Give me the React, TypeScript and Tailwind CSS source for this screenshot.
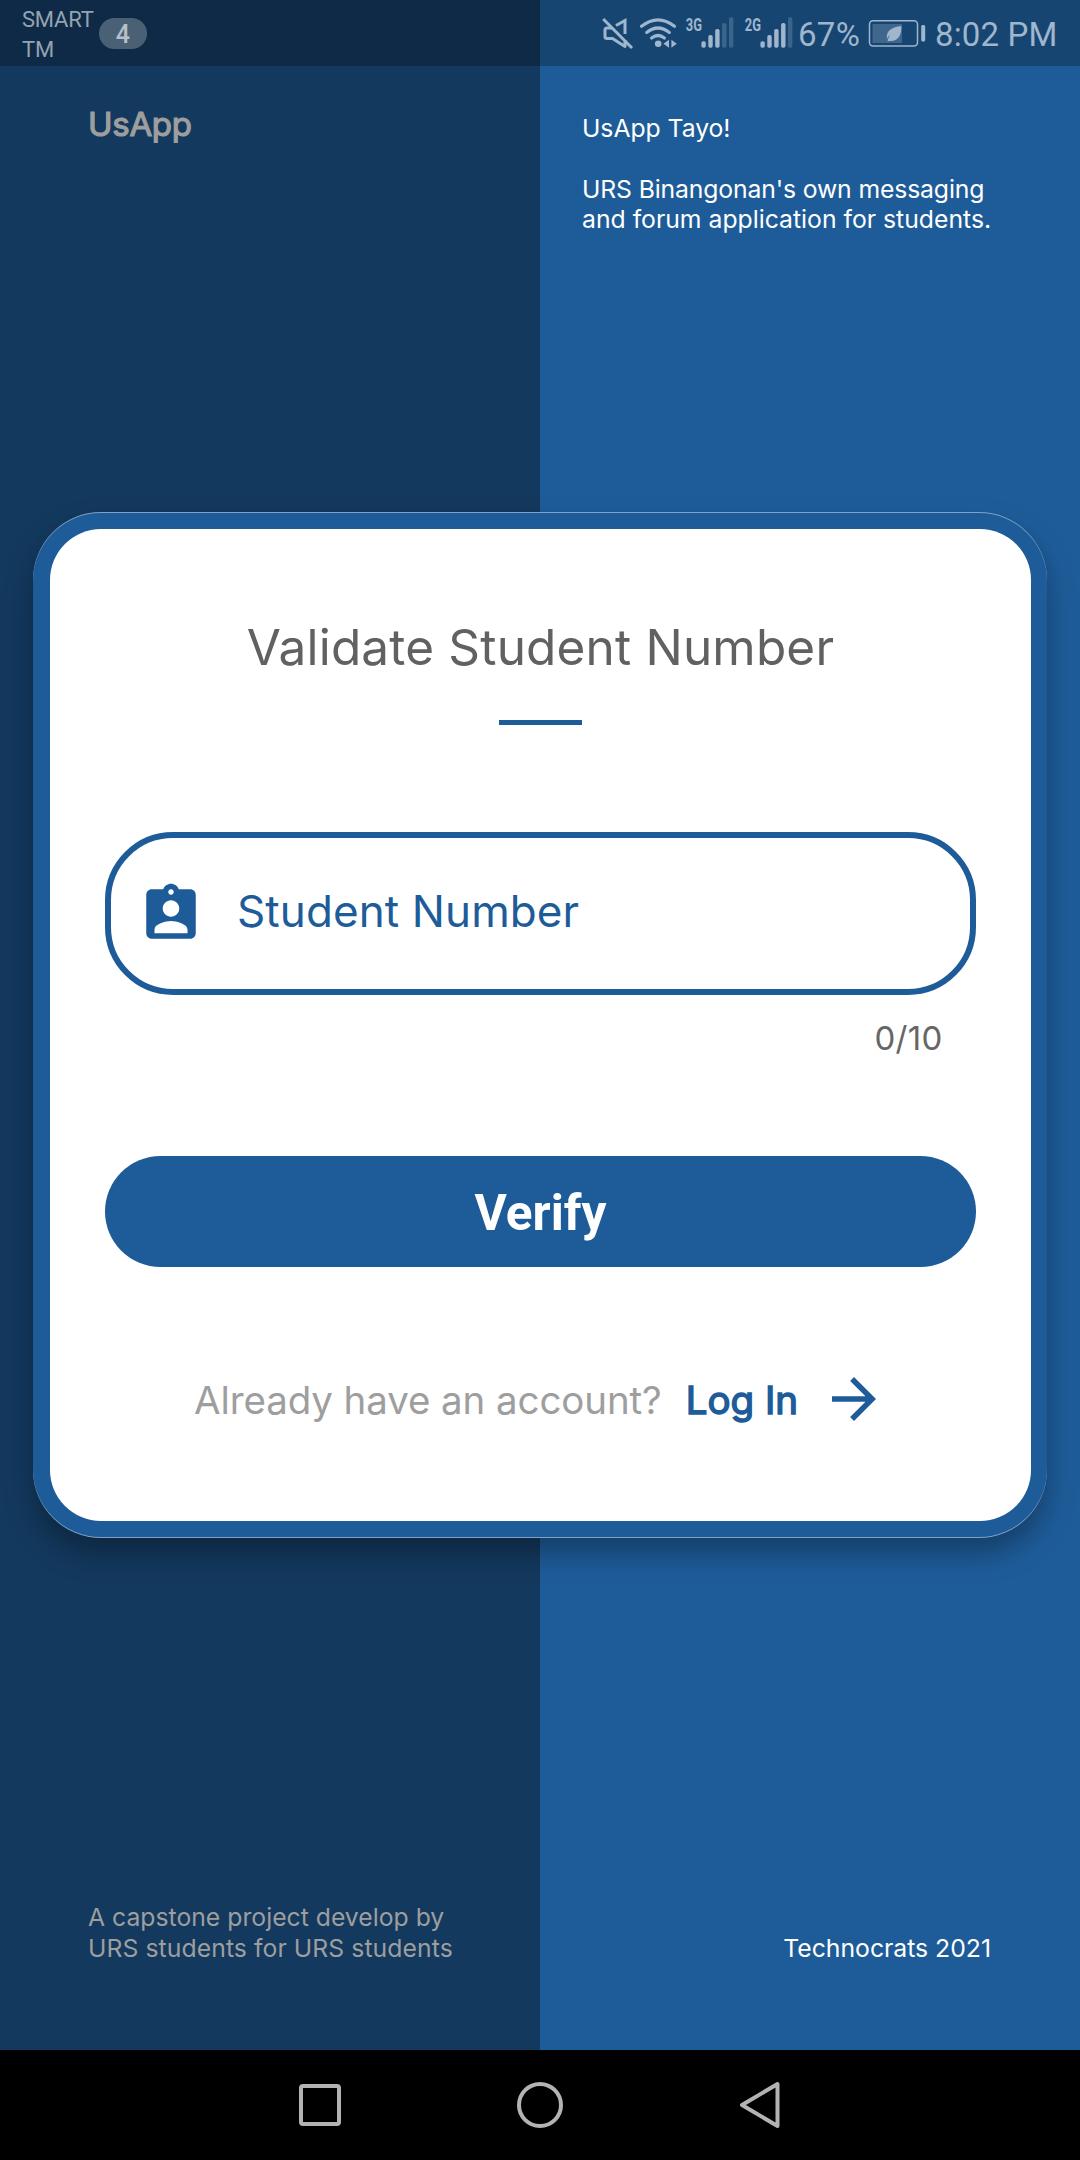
import React from "react";

function MuteIcon() {
  return (
    <svg className="ml-[600px] h-[66px] w-9 shrink-0" viewBox="0 0 36 66" fill="none" stroke="currentColor" strokeWidth="3">
      <path d="M12.500 28H7Q5 28 5 30V36.500Q5 38.500 7 38.500H12.500L25 46.500V40" strokeLinejoin="round" />
      <path d="M16 25.500L25 20.500V34" strokeLinejoin="miter" />
      <path d="M3.2 19L32 48" />
    </svg>
  );
}

function WifiIcon() {
  return (
    <svg className="h-[66px] w-10 shrink-0" viewBox="0 0 40 66" fill="none" stroke="currentColor" strokeWidth="3.200" strokeLinecap="round">
      <path d="M3.500 26.2Q20 13.4 36.500 26.2" />
      <path d="M8.7 32.4Q20 23.6 31.3 32.4" />
      <path d="M13.6 38Q20 33 26.4 38" />
      <circle cx="20.2" cy="43.800" r="3.300" fill="currentColor" stroke="none" />
      <path d="M31 39.800V47.800L25.400 43.800ZM33.400 39.800V47.800L38.800 43.800Z" fill="currentColor" stroke="none" />
    </svg>
  );
}

function Signal({ label, level }: { label: string; level: number }) {
  return (
    <svg className="h-[66px] w-[50px] shrink-0" viewBox="0 0 50 66" fill="currentColor">
      <text x="0.8" y="31.2" fontFamily="Roboto, sans-serif" fontWeight="700" fontSize="19" textLength="16.200" lengthAdjust="spacingAndGlyphs">
        {label}
      </text>
      {[41.3, 35, 29, 23, 17.3].map((top, i) => (
        <rect key={top} x={16.4 + i * 6.9} y={top} width="4.4" height={47.8 - top} rx="1.8" opacity={i < level ? 1 : 0.28} />
      ))}
    </svg>
  );
}

function BatteryIcon() {
  return (
    <svg className="h-[66px] w-[58px] shrink-0" viewBox="0 0 58 66" fill="none">
      <rect x="1.500" y="20.800" width="48" height="25.200" rx="3.500" stroke="currentColor" strokeWidth="1.500" />
      <rect x="4.500" y="24" width="29.500" height="19" fill="currentColor" opacity="0.3" />
      <rect x="53.200" y="25" width="4" height="16.500" rx="1.500" fill="currentColor" />
      <path d="M33.300 26C33.600 34 31 41.400 22 41L19.600 41.200C19.800 38.800 21 36.400 23 34.800C20.800 36 19.400 37.600 18.900 39.500C17.600 30 24 27.400 33.300 26Z" fill="currentColor" />
    </svg>
  );
}

function StatusBar() {
  return (
    <header className="absolute inset-x-0 top-0 flex h-[66px] font-['Roboto',sans-serif] text-[#9fb6cd]">
      <div className="flex w-0 shrink-0 text-[#93a3b2]">
        <div className="ml-[22px] w-[77px] shrink-0 pt-[5px] text-[22px] leading-[30px] tracking-[-0.2px]">
          SMART
          <br />
          TM
        </div>
        <div className="mt-[18px] flex h-[31px] w-[47.5px] shrink-0 items-center justify-center rounded-full bg-[#4a6175] pt-[2px] text-[25px] leading-[30px] font-medium text-[#b6c0c9]">
          4
        </div>
      </div>
      <MuteIcon />
      <span className="w-[2px] shrink-0" />
      <WifiIcon />
      <span className="w-[7px] shrink-0" />
      <Signal label="3G" level={3} />
      <span className="w-[9px] shrink-0" />
      <Signal label="2G" level={4} />
      <span className="ml-[4px] w-[70px] shrink-0 text-[33px] leading-[69px] tracking-[0.3px]">67%</span>
      <BatteryIcon />
      <span className="ml-[9px] shrink-0 text-[33px] leading-[69px] tracking-[0.15px] whitespace-nowrap">8:02 PM</span>
    </header>
  );
}

function Background() {
  return (
    <div className="grid h-[2050px] grid-cols-2 text-[24.75px] leading-[30.25px]">
      <section className="flex flex-col justify-between bg-[#13395e] pt-[104px] pb-[86px] pl-[88px] text-[#9e9e9e]">
        <h1 className="text-[33px] leading-[40px] tracking-[-0.3px] [-webkit-text-stroke:1.2px]">UsApp</h1>
        <p className="leading-[31px] whitespace-nowrap">
          A capstone project develop by
          <br />
          <span className="tracking-[0.07px]">URS students for URS students</span>
        </p>
      </section>
      <section className="flex flex-col justify-between bg-[#1e5c99] pt-[113px] pr-[89px] pb-[87px] pl-[42px] text-white">
        <div className="whitespace-nowrap">
          <p className="tracking-[-0.05px]">UsApp Tayo!</p>
          <p className="mt-[30.25px]">
            <span className="tracking-[-0.14px]">URS Binangonan's own messaging</span>
            <br />
            and forum application for students.
          </p>
        </div>
        <p className="text-right">Technocrats 2021</p>
      </section>
      <div className="absolute inset-x-0 top-0 h-[66px] bg-black/25" />
    </div>
  );
}

function BadgeIcon() {
  return (
    <svg className="size-[66px] shrink-0" viewBox="0 0 24 24" fill="currentColor">
      <path d="M19 3h-4.18C14.4 1.84 13.3 1 12 1c-1.3 0-2.4.84-2.82 2H5c-1.1 0-2 .9-2 2v14c0 1.1.9 2 2 2h14c1.1 0 2-.9 2-2V5c0-1.1-.9-2-2-2zm-7 0c.55 0 1 .45 1 1s-.45 1-1 1-1-.45-1-1 .45-1 1-1zm0 4c1.66 0 3 1.34 3 3s-1.34 3-3 3-3-1.34-3-3 1.34-3 3-3zm6 12H6v-1.400c0-2 4-3.100 6-3.100s6 1.100 6 3.100V19z" />
    </svg>
  );
}

function ArrowIcon() {
  return (
    <svg className="size-[66px] shrink-0" viewBox="0 0 24 24" fill="currentColor">
      <path d="M12 4l-1.410 1.410L16.170 11H4v2h12.170l-5.580 5.590L12 20l8-8z" />
    </svg>
  );
}

function ValidateCard() {
  return (
    <main className="absolute top-[512px] left-[33px] h-[1026px] w-[1014px] rounded-[68px] bg-[#7fa3c6] py-px shadow-[0_16px_30px_-2px_rgba(0,0,0,0.34)]">
      <div className="h-[1024px] rounded-[68px] bg-[#1e5c99] py-[16px] pr-[16px] pl-[17px]">
        <div className="flex h-[992px] flex-col items-center rounded-[51px] bg-white px-[55px] pt-[88px]">
          <h2 className="text-[49.5px] leading-[60px] tracking-[0.17px] whitespace-nowrap text-[#616161]">Validate Student Number</h2>
          <div className="mt-[42.5px] h-[5.5px] w-[83px] bg-[#1e5c99]" />
          <div className="mt-[107px] flex h-[163px] w-[871px] items-center rounded-[68px] border-[6px] border-[#1e5c99] pl-[27px] text-[#1e5c99]">
            <BadgeIcon />
            <span className="ml-[33px] pb-[5px] text-[44px] leading-[54px] tracking-[0.1px] whitespace-nowrap">Student Number</span>
          </div>
          <div className="mt-[23px] self-end pr-[33.5px] text-[33px] leading-[40px] tracking-[0.25px] text-[#666666]">0/10</div>
          <button className="mt-[98px] h-[111px] w-[871px] rounded-full bg-[#1e5c99] pt-[2px] font-['Roboto',sans-serif] text-[49.5px] leading-[60px] font-bold text-white">
            Verify
          </button>
          <div className="mt-[99px] flex items-center self-start pl-[89px] text-[38.5px] leading-[48px] whitespace-nowrap">
            <span className="pt-[2px] tracking-[-0.1px] text-[#9e9e9e]">Already have an account?</span>
            <a className="ml-[24px] flex items-center text-[#1e5c99]">
              <span className="pt-[2px] [-webkit-text-stroke:1.5px]">Log In</span>
              <span className="ml-[22.5px]">
                <ArrowIcon />
              </span>
            </a>
          </div>
        </div>
      </div>
    </main>
  );
}

function NavBar() {
  return (
    <nav className="flex h-[110px] items-center justify-center gap-[164px] bg-black text-[#b3b3b3]">
      <svg className="size-14" viewBox="0 0 56 56" fill="none" stroke="currentColor" strokeWidth="4">
        <rect x="9" y="9" width="38" height="38" rx="2" />
      </svg>
      <svg className="size-14" viewBox="0 0 56 56" fill="none" stroke="currentColor" strokeWidth="4">
        <circle cx="28" cy="28" r="21" />
      </svg>
      <svg className="size-14" viewBox="0 0 56 56" fill="none" stroke="currentColor" strokeWidth="4" strokeLinejoin="round">
        <path d="M45.500 7V49L10 28Z" />
      </svg>
    </nav>
  );
}

export default function App() {
  return (
    <div className="relative h-[2160px] w-[1080px] overflow-hidden font-['Inter',sans-serif]">
      <Background />
      <StatusBar />
      <ValidateCard />
      <NavBar />
    </div>
  );
}
